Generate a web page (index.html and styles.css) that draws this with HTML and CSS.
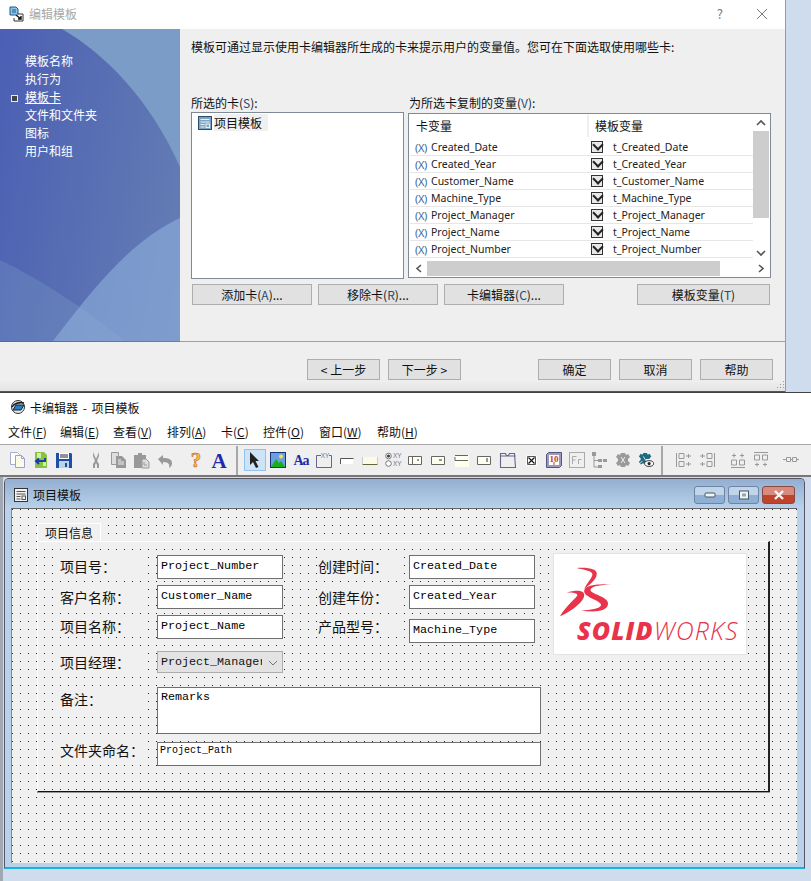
FILE: index.html
```html
<!DOCTYPE html>
<html lang="zh-CN">
<head>
    <meta charset="UTF-8">
    <title>卡编辑器 - 项目模板</title>
    <link rel="stylesheet" href="styles.css">
</head>
<body>

<!-- Vorlagen-Dialog -->
<section class="dialog">
    <div class="dialog-title">
        <svg class="icon-16" viewBox="0 0 16 16"><path d="M1 1h6l2 2v6H1z" fill="#8fc3e8" stroke="#1d5a8a"/><path d="M3 4h4M3 6h4" stroke="#1d5a8a"/><path d="M8 8h6v7H5v-3" fill="#fff" stroke="#333"/><path d="M7 9l5 4M12 10v3H9" fill="none" stroke="#111" stroke-width="1.4"/></svg>
        <span class="dialog-name">编辑模板</span>
        <span class="dialog-help">?</span>
        <svg class="dialog-close" viewBox="0 0 12 12"><path d="M1 1l10 10M11 1L1 11" stroke="#777" fill="none"/></svg>
    </div>
    <div class="dialog-body">
        <nav class="sidebar">
            <svg class="sidebar-art" viewBox="0 0 180 312">
                <path d="M62 0C105 25 150 70 180 138V0z" fill="#7a9cc6"/>
                <path d="M0 231C40 250 85 280 125 312H0z" fill="#8fb4d0" fill-opacity=".22"/>
                <path d="M180 189C135 210 100 250 53 312H180z" fill="#8fb0dc" fill-opacity=".6"/>
            </svg>
            <a class="nav-item">模板名称</a>
            <a class="nav-item">执行为</a>
            <a class="nav-item nav-active">模板卡</a>
            <a class="nav-item">文件和文件夹</a>
            <a class="nav-item">图标</a>
            <a class="nav-item">用户和组</a>
        </nav>
        <div class="pane">
            <p class="pane-desc">模板可通过显示使用卡编辑器所生成的卡来提示用户的变量值。您可在下面选取使用哪些卡:</p>
            <div class="lists">
                <div class="list-col list-col-cards">
                    <label class="list-label">所选的卡(<span class="key">S</span>):</label>
                    <div class="card-list">
                        <div class="card-item">
                            <svg class="icon-14" viewBox="0 0 14 14"><rect x=".5" y=".5" width="13" height="13" fill="#7fa3c2" stroke="#2d4a66"/><path d="M2.5 3.5h9M2.5 6h9M2.5 8.5h4M2.5 11h4" stroke="#e8f0f6"/><rect x="8" y="8" width="3.5" height="3.5" fill="none" stroke="#e8f0f6"/></svg>
                            <span class="card-name">项目模板</span>
                        </div>
                    </div>
                </div>
                <div class="list-col list-col-vars">
                    <label class="list-label">为所选卡复制的变量(<span class="key">V</span>):</label>
                    <div class="var-list">
                        <div class="var-main">
                            <div class="var-table">
                                <div class="var-head"><span class="head-a">卡变量</span><span class="head-b">模板变量</span></div>
                                <div class="var-row"><span class="var-x">(X)</span><span class="var-name">Created_Date</span><span class="check"></span><span class="var-target">t_Created_Date</span></div>
                                <div class="var-row"><span class="var-x">(X)</span><span class="var-name">Created_Year</span><span class="check"></span><span class="var-target">t_Created_Year</span></div>
                                <div class="var-row"><span class="var-x">(X)</span><span class="var-name">Customer_Name</span><span class="check"></span><span class="var-target">t_Customer_Name</span></div>
                                <div class="var-row"><span class="var-x">(X)</span><span class="var-name">Machine_Type</span><span class="check"></span><span class="var-target">t_Machine_Type</span></div>
                                <div class="var-row"><span class="var-x">(X)</span><span class="var-name">Project_Manager</span><span class="check"></span><span class="var-target">t_Project_Manager</span></div>
                                <div class="var-row"><span class="var-x">(X)</span><span class="var-name">Project_Name</span><span class="check"></span><span class="var-target">t_Project_Name</span></div>
                                <div class="var-row"><span class="var-x">(X)</span><span class="var-name">Project_Number</span><span class="check"></span><span class="var-target">t_Project_Number</span></div>
                                <div class="var-row var-row-cut"><span class="var-x"></span><span class="var-name"></span><span class="check"></span></div>
                            </div>
                            <div class="vscroll">
                                <svg class="arrow" viewBox="0 0 16 16"><path d="M4 10l4-4 4 4" fill="none" stroke="#555" stroke-width="1.6"/></svg>
                                <div class="vscroll-track"><div class="vscroll-thumb"></div></div>
                                <svg class="arrow" viewBox="0 0 16 16"><path d="M4 6l4 4 4-4" fill="none" stroke="#555" stroke-width="1.6"/></svg>
                            </div>
                        </div>
                        <div class="hscroll">
                            <svg class="arrow-h" viewBox="0 0 17 15"><path d="M11 4L7 7.5l4 3.5" fill="none" stroke="#555" stroke-width="1.6"/></svg>
                            <div class="hscroll-thumb"></div>
                            <svg class="arrow-h arrow-right" viewBox="0 0 17 15"><path d="M7 4l4 3.5L7 11" fill="none" stroke="#555" stroke-width="1.6"/></svg>
                        </div>
                    </div>
                </div>
            </div>
            <div class="pane-buttons">
                <button class="btn btn-card">添加卡(<span class="key">A</span>)...</button>
                <button class="btn btn-card">移除卡(<span class="key">R</span>)...</button>
                <button class="btn btn-card">卡编辑器(<span class="key">C</span>)...</button>
                <button class="btn btn-vars">模板变量(<span class="key">T</span>)</button>
            </div>
        </div>
    </div>
    <div class="dialog-foot">
        <button class="btn btn-foot">&lt; 上一步</button>
        <button class="btn btn-foot btn-next">下一步 &gt;</button>
        <button class="btn btn-foot btn-ok">确定</button>
        <button class="btn btn-foot btn-cancel">取消</button>
        <button class="btn btn-foot btn-cancel">帮助</button>
        <svg class="grip" viewBox="0 0 10 10"><path d="M8 1h1v1H8zM5 4h1v1H5zM8 4h1v1H8zM2 7h1v1H2zM5 7h1v1H5zM8 7h1v1H8z" fill="#999"/></svg>
    </div>
</section>

<!-- Kartenedit-Fenster -->
<section class="editor">
    <div class="editor-title">
        <svg class="icon-16" viewBox="0 0 16 16"><circle cx="8" cy="8" r="6.5" fill="#dfe8f0" stroke="#333"/><path d="M2 8c2-4 8-5 12-4" fill="none" stroke="#222" stroke-width="1.6"/><path d="M3 11l3-5h8l-3 5z" fill="#2a7fc4" stroke="#123"/></svg>
        <span class="editor-name">卡编辑器 - 项目模板</span>
    </div>
    <div class="menubar">
        <span class="menu m1">文件(<u>F</u>)</span>
        <span class="menu m2">编辑(<u>E</u>)</span>
        <span class="menu m3">查看(<u>V</u>)</span>
        <span class="menu m4">排列(<u>A</u>)</span>
        <span class="menu m5">卡(<u>C</u>)</span>
        <span class="menu m6">控件(<u>O</u>)</span>
        <span class="menu m7">窗口(<u>W</u>)</span>
        <span class="menu m8">帮助(<u>H</u>)</span>
    </div>
    <div class="toolbar">
        <svg class="tool" viewBox="0 0 16 16"><path d="M.5.5h7l2 2v10H.5z" fill="#fff" stroke="#a9a9d6"/><path d="M5.5 3.5h6l3 3v9h-9z" fill="#fbfbe8" stroke="#9f9fcc"/><path d="M11.5 3.5v3h3" fill="none" stroke="#9f9fcc"/></svg>
        <svg class="tool" viewBox="0 0 16 16"><path d="M2 0h9l3 3v13H2z" fill="#86c440"/><path d="M4 1h4v5H4zM10 10h3v4h-3z" fill="#d5ecb0"/><path d="M12 6v3H4M6 6.500L3 9l3 3" fill="none" stroke="#1b3fa6" stroke-width="2"/></svg>
        <svg class="tool" viewBox="0 0 16 16"><path d="M0 1h15l1 1v14H0z" fill="#1d4fa6"/><path d="M3 1h10v6H3z" fill="#fff"/><path d="M4 3h8M4 5h8" stroke="#223"/><path d="M3 9h10v7H3z" fill="#bcd3ec"/><path d="M9 11h2v4H9z" fill="#234f90"/></svg>
        <svg class="tool tool-gap1" viewBox="0 0 16 16"><path d="M5 0l3 7 3-7v4L9 9l2 3v4H9V13L8 11l-1 2v3H5v-4l2-3-2-5z" fill="#999"/></svg>
        <svg class="tool" viewBox="0 0 16 16"><path d="M.5.5h7v12H.5z" fill="#ddd" stroke="#999"/><path d="M5 4h6l4 4v8H5z" fill="#999"/><path d="M7 8h3M7 10h6M7 12h6" stroke="#eee"/></svg>
        <svg class="tool" viewBox="0 0 16 16"><path d="M0 3h4V1h4v2h4v6H9v7H0z" fill="#999"/><path d="M8 7h4l3 3v6H8z" fill="#ddd" stroke="#999"/><path d="M10 10v3h3" stroke="#999" fill="none"/></svg>
        <svg class="tool" viewBox="0 0 16 16"><path d="M1 7l5-4v3c5 0 9 1 9 5 0 2-1 4-3 5 1-3 0-6-6-6v3z" fill="#999"/></svg>
        <svg class="tool tool-gap2" viewBox="0 0 16 16"><text class="glyph-q" x="8" y="15" text-anchor="middle">?</text></svg>
        <svg class="tool" viewBox="0 0 16 16"><text class="glyph-a" x="8" y="15.500" text-anchor="middle">A</text></svg>
        <span class="tool-sep"></span>
        <span class="tool-active"><svg class="tool" viewBox="0 0 16 16"><path d="M3 0v13l3-3 3 6 2.500-1-3-6H12z" fill="#222"/></svg></span>
        <svg class="tool" viewBox="0 0 16 16"><rect width="16" height="16" fill="#15347a"/><rect x="1" y="1" width="14" height="14" fill="#6aa0e0"/><circle cx="11" cy="4.500" r="2" fill="#f3e64a"/><path d="M1 15l5-8 3 4 2-2 4 6z" fill="#18b018"/></svg>
        <svg class="tool" viewBox="0 0 16 16"><text class="glyph-aa" x="8" y="13" text-anchor="middle">Aa</text></svg>
        <svg class="tool" viewBox="0 0 16 16"><path d="M5 3.500H.5v12h15v-12H13" fill="none" stroke="#66668a"/><text class="glyph-xy" x="9" y="6" text-anchor="middle">XY</text></svg>
        <svg class="tool" viewBox="0 0 16 16"><path d="M1 12V6h13v6z" fill="#fff"/><path d="M1.500 12V6.500h13" fill="none" stroke="#555"/></svg>
        <svg class="tool" viewBox="0 0 16 16"><path d="M.5 12V5h15v7z" fill="#fbfbe8"/><path d="M.5 12.500h15" stroke="#66663a"/><path d="M.5 12V5M15.500 12V5" stroke="#ccc"/></svg>
        <svg class="tool" viewBox="0 0 16 16"><circle cx="3.500" cy="4" r="2.800" fill="#fff" stroke="#777"/><circle cx="3.500" cy="4" r="1.500" fill="#333"/><circle cx="3.500" cy="11.500" r="2.800" fill="#fff" stroke="#777"/><text class="glyph-xy" x="8" y="6">XY</text><text class="glyph-xy" x="8" y="14">XY</text></svg>
        <svg class="tool" viewBox="0 0 16 16"><path d="M.5 12.500v-8h13v8z" fill="#fffff0" stroke="#666"/><path d="M4.500 5v7" stroke="#666"/><path d="M9 8h2" stroke="#333"/></svg>
        <svg class="tool" viewBox="0 0 16 16"><path d="M.5 12.500v-8h13v8z" fill="#fffff0" stroke="#666"/><path d="M8 8h3" stroke="#333"/></svg>
        <svg class="tool" viewBox="0 0 16 16"><path d="M1 15V3h14v12z" fill="#fffff0"/><path d="M1 3.500h13M1 8.500V5M1 8.500h13" fill="none" stroke="#666"/></svg>
        <svg class="tool" viewBox="0 0 16 16"><path d="M.5 12.500v-8h13v8z" fill="#fffff0" stroke="#666"/><path d="M9 7h2M9 9h2" stroke="#333"/></svg>
        <svg class="tool" viewBox="0 0 16 16"><path d="M.5 15.500v-14h5l1 2h2l1-2h5l1 14z" fill="none" stroke="#66668a" stroke-width="1.100"/><path d="M.5 4h15" stroke="#66668a"/></svg>
        <svg class="tool" viewBox="0 0 16 16"><path d="M3 3.500h11v10H3z" fill="#fff"/><path d="M5.500 5.500l6 6M11.500 5.500l-6 6" stroke="#111" stroke-width="1.200"/><path d="M4.500 4.500h8v8h-8z" fill="none" stroke="#555"/></svg>
        <svg class="tool" viewBox="0 0 16 16"><path d="M.5 2.500l2-2h13v13l-2 2H.5z" fill="#9a9ac0" stroke="#55557a"/><path d="M3 3h10v10H3z" fill="#fff"/><text class="glyph-ten" x="8" y="10" text-anchor="middle">10</text><path d="M8 10v3" stroke="#c0392b"/></svg>
        <svg class="tool" viewBox="0 0 16 16"><rect x=".5" y=".5" width="15" height="15" fill="none" stroke="#aaa"/><path d="M3.500 12V4.500h4M3.500 8h3M9.500 12V7.500h3" fill="none" stroke="#aaa"/></svg>
        <svg class="tool" viewBox="0 0 16 16"><path d="M0 0h4v4H0zM6 7h4v3H6zM11 7h4v3h-4zM6 13h4v3H6z" fill="#999"/><path d="M2 4v11h4M2 8.500h4" fill="none" stroke="#999"/></svg>
        <svg class="tool" viewBox="0 0 16 16"><path d="M6 1h4l1 2 2-1 2 3-2 2v2l2 2-2 3-2-1-1 2H6l-1-2-2 1-2-3 2-2V7L1 5l2-3 2 1z" fill="#999"/><path d="M6 5l4 6M10 5l-4 6" stroke="#eee"/></svg>
        <svg class="tool" viewBox="0 0 18 18"><path d="M6 1h4l1 2 2-1 2 3-2 2v1H9v5H5l-2 1-2-3 2-2V7L1 5l2-3 2 1z" fill="#1e6a80"/><path d="M6 5l3 5M1 14l4-4" stroke="#eee"/><ellipse cx="12.500" cy="13" rx="5" ry="3.200" fill="#fff" stroke="#222"/><circle cx="12.500" cy="13" r="1.800" fill="#222"/></svg>
        <span class="tool-sep tool-sep-2"></span>
        <svg class="tool" viewBox="0 0 16 16"><path d="M.5 1v14" stroke="#999"/><path d="M3 1.500h5v5H3zM3 9.500h5v5H3z" fill="none" stroke="#999"/><path d="M10 4h5M12.500 2v4M10 12h5M12.500 10v4" stroke="#999"/></svg>
        <svg class="tool" viewBox="0 0 16 16"><path d="M15.500 1v14" stroke="#999"/><path d="M8 1.500h5v5H8zM8 9.500h5v5H8z" fill="none" stroke="#999"/><path d="M1 4h5M3.500 2v4M1 12h5M3.500 10v4" stroke="#999"/></svg>
        <svg class="tool tool-gap3" viewBox="0 0 16 16"><path d="M1 15.500h14" stroke="#999"/><path d="M1.500 8h5v5h-5zM9.500 8h5v5h-5z" fill="none" stroke="#999"/><path d="M2 3.500h4M4 1.500v4M10 3.500h4M12 1.500v4" stroke="#999"/></svg>
        <svg class="tool" viewBox="0 0 16 16"><path d="M1 .5h14" stroke="#999"/><path d="M1.500 3h5v5h-5zM9.500 3h5v5h-5z" fill="none" stroke="#999"/><path d="M2 12.500h4M4 10.500v4M10 12.500h4M12 10.500v4" stroke="#999"/></svg>
        <svg class="tool tool-gap4" viewBox="0 0 16 16"><path d="M3.500 5.500h4v4h-4zM9.500 5.500h4v4h-4z" fill="none" stroke="#999"/><path d="M0 7.500h3M7.500 7.500h2M13.500 7.500H16" stroke="#999"/></svg>
    </div>
    <div class="mdi">
        <div class="child">
            <div class="child-title">
                <svg class="icon-14" viewBox="0 0 14 14"><rect x=".5" y=".5" width="13" height="13" fill="#f2f2f2" stroke="#333"/><path d="M2.500 3.500h9M2.500 6h9M2.500 8.500h4M2.500 11h4" stroke="#555"/><rect x="8" y="8" width="3.500" height="3.500" fill="none" stroke="#555"/></svg>
                <span class="child-name">项目模板</span>
                <div class="win-buttons">
                    <span class="win-btn"><svg viewBox="0 0 12 8" class="win-glyph"><rect x="1" y="2" width="10" height="4" rx="1" fill="#f4f4f4" stroke="#456"/></svg></span>
                    <span class="win-btn"><svg viewBox="0 0 12 10" class="win-glyph"><rect x="1.500" y="1" width="9" height="8" fill="#f4f4f4" stroke="#456"/><rect x="4" y="3.500" width="4" height="3" fill="#8ab"/></svg></span>
                    <span class="win-btn win-close"><svg viewBox="0 0 12 10" class="win-glyph"><path d="M2 1l8 8M10 1L2 9" stroke="#f8f8f8" stroke-width="2.400"/></svg></span>
                </div>
            </div>
            <div class="canvas">
                <div class="tab">项目信息</div>
                <div class="panel"></div>

                <span class="lbl lbl-l r1">项目号：</span>
                <span class="lbl lbl-l r2">客户名称：</span>
                <span class="lbl lbl-l r3">项目名称：</span>
                <span class="lbl lbl-l r4">项目经理：</span>
                <span class="lbl lbl-l r5">备注：</span>
                <span class="lbl lbl-l r6">文件夹命名：</span>
                <span class="lbl lbl-r r1">创建时间：</span>
                <span class="lbl lbl-r r2">创建年份：</span>
                <span class="lbl lbl-r r3">产品型号：</span>

                <div class="field f-l f1">Project_Number</div>
                <div class="field f-l f2">Customer_Name</div>
                <div class="field f-l f3">Project_Name</div>
                <div class="combo"><span class="combo-text">Project_Manager</span><svg class="combo-arrow" viewBox="0 0 10 6"><path d="M1 1l4 4 4-4" fill="none" stroke="#777"/></svg></div>
                <div class="field f-wide f-remarks">Remarks</div>
                <div class="field f-wide f-path">Project_Path</div>
                <div class="field f-r f1">Created_Date</div>
                <div class="field f-r f2">Created_Year</div>
                <div class="field f-r f4">Machine_Type</div>

                <div class="logo">
                    <svg class="logo-mark" viewBox="480 100 160 160">
                        <path d="M530 106C565 104 598 108 590 130 585 145 570 155 553 170 562 150 578 135 578 125 578 115 555 112 530 106z"/>
                        <path d="M500 180C530 172 555 172 553 190 551 210 510 240 480 252 495 225 520 205 532 190 535 182 520 180 500 180z"/>
                        <path d="M636 155C600 158 575 160 572 172 570 185 628 192 625 215 622 238 585 240 545 235 570 232 602 230 604 218 606 205 550 195 553 175 556 155 600 155 636 155z"/>
                    </svg>
                    <div class="logo-text"><b>SOLID</b>WORKS</div>
                </div>
            </div>
        </div>
    </div>
</section>

</body>
</html>
```

FILE: styles.css
```css
* {
    box-sizing: border-box;
}

body {
    margin: 0;
    width: 811px;
    height: 881px;
    overflow: hidden;
    background-color: #cfdcee;
    font-family: "Noto Sans CJK SC", "Noto Sans", sans-serif;
    font-size: 12px;
    color: #111;
}

svg {
    display: block;
    flex: none;
}

.icon-16 {
    width: 16px;
    height: 16px;
}

.icon-14 {
    width: 14px;
    height: 14px;
}

.key {
    color: #234a7a;
}

/* Dialog */
.dialog {
    width: 786px;
    height: 392px;
    background-color: #efefef;
    border-right: 1px solid #9a9a9a;
    display: flex;
    flex-direction: column;
}

.dialog-title {
    height: 29px;
    flex: none;
    background-color: #fff;
    display: flex;
    align-items: center;
    padding: 0 17px 2px 9px;
}

.dialog-name {
    margin-left: 4px;
    color: #a8a8a8;
}

.dialog-help {
    margin-left: auto;
    margin-right: 33px;
    color: #777;
    font-size: 13px;
}

.dialog-close {
    width: 12px;
    height: 12px;
}

.dialog-body {
    height: 313px;
    flex: none;
    display: flex;
}

.sidebar {
    width: 180px;
    flex: none;
    position: relative;
    padding: 23px 0 0 25px;
    background: linear-gradient(100deg, #4b5fb4 0%, #5b72b3 60%, #657fb5 100%);
    display: flex;
    flex-direction: column;
}

.sidebar-art {
    position: absolute;
    left: 0;
    top: 0;
    width: 180px;
    height: 312px;
}

.nav-item {
    position: relative;
    color: #fff;
    height: 18px;
    line-height: 18px;
}

.nav-active {
    text-decoration: underline;
}

.nav-active::before {
    content: "";
    position: absolute;
    left: -14px;
    top: 7px;
    width: 5px;
    height: 5px;
    background-color: #444;
    border: 1px solid #e8e8f4;
}

.pane {
    flex: 1;
    padding: 9px 15px 0 11px;
    border-bottom: 1px solid #a0a0a0;
    display: flex;
    flex-direction: column;
}

.pane-desc {
    margin: 0;
    height: 18px;
    line-height: 18px;
}

.lists {
    margin-top: 38px;
    display: flex;
    gap: 4px;
}

.list-col-cards {
    width: 213px;
}

.list-col-vars {
    width: 363px;
}

.list-label {
    display: block;
    height: 18px;
    line-height: 18px;
}

.list-col-vars .list-label {
    margin-left: 1px;
}

.card-list {
    height: 167px;
    background-color: #fff;
    border: 1px solid #7f8a99;
    padding: 1px 0 0 6px;
}

.card-item {
    display: flex;
    align-items: center;
}

.card-name {
    margin-left: 2px;
    padding-right: 6px;
    height: 17px;
    line-height: 17px;
    background-color: #f0f0f0;
}

.var-list {
    margin-top: 1px;
    height: 165px;
    background-color: #fff;
    border: 1px solid #7f8a99;
    padding: 1px;
    display: flex;
    flex-direction: column;
}

.var-main {
    height: 146px;
    flex: none;
    display: flex;
    overflow: hidden;
}

.var-table {
    width: 343px;
    flex: none;
}

.var-head {
    height: 22px;
    margin-bottom: 2px;
    display: flex;
    font-size: 12px;
    line-height: 22px;
}

.head-a {
    width: 179px;
    padding-left: 6px;
    border-right: 2px solid #eee;
}

.head-b {
    padding-left: 6px;
}

.var-row {
    height: 17px;
    display: flex;
    align-items: center;
    border-bottom: 1px solid #e6e6e6;
    font-family: "Noto Sans", sans-serif;
    font-size: 10.5px;
    color: #222;
}

.var-row-cut {
    border-bottom: none;
}

.var-x {
    width: 21px;
    flex: none;
    padding-left: 5px;
    color: #3c6a9c;
    font-size: 11px;
    letter-spacing: -0.4px;
    white-space: nowrap;
}

.var-name {
    width: 160px;
    flex: none;
}

.check {
    width: 12px;
    height: 12px;
    flex: none;
    border: 1px solid #333;
    background-color: #e8e8e8;
    position: relative;
}

.check::after {
    content: "";
    position: absolute;
    left: 2px;
    top: -1px;
    width: 6px;
    height: 6px;
    border-left: 2px solid #222;
    border-bottom: 2px solid #222;
    transform: rotate(-45deg);
}

.var-target {
    margin-left: 10px;
}

.vscroll {
    width: 16px;
    flex: none;
    display: flex;
    flex-direction: column;
    background-color: #fff;
}

.arrow {
    width: 16px;
    height: 16px;
}

.vscroll-track {
    flex: 1;
}

.vscroll-thumb {
    height: 87px;
    background-color: #cdcdcd;
}

.hscroll {
    width: 359px;
    height: 15px;
    flex: none;
    display: flex;
    align-items: center;
}

.arrow-h {
    width: 17px;
    height: 15px;
}

.hscroll-thumb {
    width: 293px;
    height: 15px;
    background-color: #cdcdcd;
}

.arrow-right {
    margin-left: auto;
}

.btn {
    height: 21px;
    padding: 0;
    background-color: #e1e1e1;
    border: 1px solid #adadad;
    font-family: inherit;
    font-size: 12px;
    color: #111;
}

.pane-buttons {
    margin-top: 5px;
    display: flex;
    gap: 6px;
    padding-left: 1px;
}

.btn-card {
    width: 120px;
}

.btn-vars {
    width: 133px;
    margin-left: 67px;
}

.dialog-foot {
    flex: 1;
    position: relative;
    display: flex;
    padding: 17px 0 0 307px;
    background: linear-gradient(#efefef 38px, #e4e4e4 100%);
    border-bottom: 1px solid #555;
}

.btn-foot {
    width: 73px;
}

.btn-next {
    margin-left: 8px;
}

.btn-ok {
    margin-left: 77px;
}

.btn-cancel {
    margin-left: 8px;
}

.grip {
    position: absolute;
    right: 0;
    bottom: 1px;
    width: 10px;
    height: 10px;
}

/* Editor */
.editor {
    height: 489px;
    display: flex;
    flex-direction: column;
    border-top: 1px solid #444;
}

.editor-title {
    height: 28px;
    flex: none;
    background-color: #fff;
    display: flex;
    align-items: center;
    gap: 4px;
    padding-left: 10px;
}

.editor-name {
    word-spacing: 2px;
}

.menubar {
    height: 23px;
    flex: none;
    background-color: #fff;
    position: relative;
}

.menu {
    position: absolute;
    top: 2px;
    line-height: 18px;
}

.m1 { left: 8px; }
.m2 { left: 60px; }
.m3 { left: 113px; }
.m4 { left: 167px; }
.m5 { left: 221px; }
.m6 { left: 263px; }
.m7 { left: 319px; }
.m8 { left: 377px; }

.toolbar {
    height: 33px;
    flex: none;
    background-color: #efefef;
    border-top: 1px solid #a8a8a8;
    border-bottom: 2px solid #777;
    display: flex;
    align-items: center;
    gap: 7px;
    padding-left: 10px;
}

.tool {
    width: 16px;
    height: 16px;
    overflow: visible;
}

.tool-gap1 { margin-left: 9px; }
.tool-gap2 { margin-left: 8px; }
.tool-gap3 { margin-left: 8px; }
.tool-gap4 { margin-left: 7px; }

.glyph-q {
    font-family: "Liberation Serif", serif;
    font-weight: bold;
    font-size: 21px;
    fill: #f0c040;
    stroke: #c8501e;
    stroke-width: .5px;
}

.glyph-a {
    font-family: "Liberation Serif", serif;
    font-weight: bold;
    font-size: 21px;
    fill: #1f2aa8;
}

.glyph-aa {
    font-family: "Liberation Serif", serif;
    font-weight: bold;
    font-size: 14px;
    letter-spacing: -1px;
    fill: #1f2aa8;
}

.glyph-xy {
    font-family: "Liberation Sans", sans-serif;
    font-size: 6.5px;
    fill: #777;
}

.glyph-ten {
    font-family: "Liberation Serif", serif;
    font-weight: bold;
    font-size: 9px;
    fill: #c0392b;
}

.tool-sep {
    width: 2px;
    height: 29px;
    margin: 0 2px;
    background-color: #a8a8a8;
}

.tool-sep-2 {
    margin: 0 6px 0 0;
}

.tool-active {
    width: 22px;
    height: 22px;
    margin: 0 -3px;
    background-color: #cde3f7;
    border: 1px solid #90c4ee;
    display: flex;
    align-items: center;
    justify-content: center;
}

.mdi {
    flex: 1;
    padding: 1px 0 0 1px;
    background-color: #cfdcee;
    border-left: 3px solid #a0a8b4;
}

.child {
    width: 801px;
    height: 391px;
    background-color: #b9d1ea;
    border: 1px solid #556;
    border-bottom: 2px solid #16b4d6;
    border-radius: 5px 5px 0 0;
    display: flex;
    flex-direction: column;
}

.child-title {
    height: 29px;
    flex: none;
    background: linear-gradient(#93aed0, #b9d1ea);
    display: flex;
    align-items: center;
    padding: 2px 9px 0 9px;
    border-radius: 4px 4px 0 0;
}

.child-name {
    margin-left: 5px;
}

.win-buttons {
    margin-left: auto;
    display: flex;
    gap: 3px;
}

.win-btn {
    width: 31px;
    height: 18px;
    background: linear-gradient(#c0d4ea 50%, #8fb0d4 50%);
    border: 1px solid #6d84a2;
    border-radius: 3px;
    display: flex;
    align-items: center;
    justify-content: center;
}

.win-close {
    width: 33px;
    background: linear-gradient(#d88a7c 50%, #c0432c 50%);
    border-color: #8a4a44;
}

.win-glyph {
    width: 12px;
    height: 10px;
}

/* Formular-Zeichenfläche: Elemente liegen frei wie im Designer */
.canvas {
    position: relative;
    margin: 0 7px 0 6px;
    height: 355px;
    background-color: #f0f0f0;
    background-image: radial-gradient(circle at 0.5px 0.5px, #222 0.5px, transparent 0.6px);
    background-size: 8px 8px;
    border-top: 1px solid #666;
    border-left: 1px solid #888;
}

.tab {
    position: absolute;
    left: 25px;
    top: 14px;
    width: 64px;
    height: 19px;
    padding-left: 7px;
    line-height: 17px;
    background-color: #f0f0f0;
    border: 1px solid #fff;
    border-bottom: none;
}

.panel {
    position: absolute;
    left: 25px;
    top: 32px;
    width: 733px;
    height: 251px;
    border-top: 1px solid #fff;
    border-left: 1px solid #fff;
    border-right: 2px solid #222;
    border-bottom: 1px solid #111;
    box-shadow: 0 1px 0 #999;
}

.lbl {
    position: absolute;
    height: 22px;
    line-height: 22px;
    font-size: 14px;
    background-color: #f0f0f0;
    white-space: nowrap;
}

.lbl-l {
    left: 48px;
    width: 86px;
}

.lbl-r {
    left: 306px;
    width: 86px;
}

.r1 { top: 46px; }
.r2 { top: 77px; }
.r3 { top: 106px; }
.r4 { top: 142px; }
.r5 { top: 179px; }
.r6 { top: 230px; }

.field {
    position: absolute;
    background-color: #fff;
    border: 1px solid #6f6f6f;
    padding: 3px 3px 0;
    font-family: "Liberation Mono", monospace;
    font-size: 11.7px;
    line-height: 14px;
    color: #000;
}

.f-l { left: 145px; width: 126px; }
.f-r { left: 397px; width: 126px; }
.f1 { top: 46px; height: 24px; }
.f2 { top: 76px; height: 24px; }
.f3 { top: 106px; height: 24px; }
.f4 { top: 110px; height: 24px; }

.f-wide {
    left: 145px;
    width: 384px;
}

.f-remarks {
    top: 178px;
    height: 47px;
    padding-top: 2px;
}

.f-path {
    top: 233px;
    height: 24px;
    font-size: 10px;
    line-height: 13px;
    padding: 1px 2px 0;
}

.combo {
    position: absolute;
    left: 145px;
    top: 142px;
    width: 126px;
    height: 22px;
    background-color: #e3e3e3;
    border: 1px solid #adadad;
    padding: 3px;
    display: flex;
    align-items: flex-start;
    font-family: "Liberation Mono", monospace;
    font-size: 11.7px;
    line-height: 14px;
}

.combo-text {
    width: 101px;
    flex: none;
    overflow: hidden;
    white-space: nowrap;
}

.combo-arrow {
    width: 10px;
    height: 6px;
    margin: 5px 0 0 6px;
}

.logo {
    position: absolute;
    left: 541px;
    top: 44px;
    width: 194px;
    height: 102px;
    background-color: #fff;
    border: 1px solid #e4e4e4;
    padding: 12px 0 0 6px;
}

.logo-mark {
    width: 53px;
    height: 53px;
    fill: #e8334a;
}

.logo-text {
    margin: 0 0 0 17px;
    font-family: "Open Sans", sans-serif;
    font-style: italic;
    font-weight: 300;
    font-size: 25px;
    line-height: 22px;
    letter-spacing: 1.1px;
    color: #e8334a;
    white-space: nowrap;
}

.logo-text b {
    font-weight: 800;
}
```
